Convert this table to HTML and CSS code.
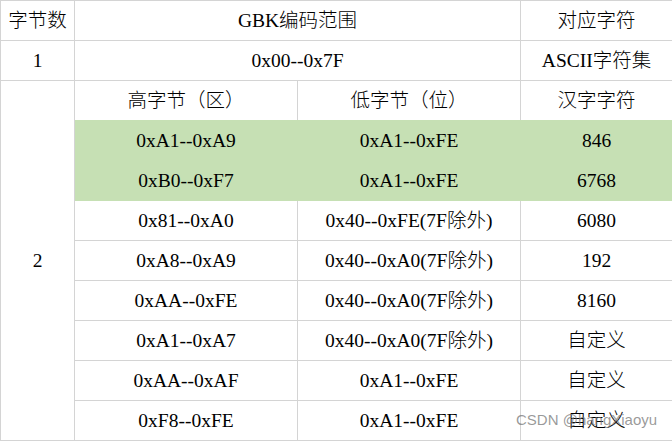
FILE: index.html
```html
<!DOCTYPE html>
<html lang="zh">
<head>
<meta charset="utf-8">
<title>GBK编码范围</title>
<link rel="stylesheet" href="styles.css">
</head>
<body>
<div class="wrap">
<table class="gbk">
  <colgroup>
    <col class="c1"><col class="c2"><col class="c3"><col class="c4">
  </colgroup>
  <tbody>
    <tr><td>字节数</td><td colspan="2">GBK编码范围</td><td>对应字符</td></tr>
    <tr><td>1</td><td colspan="2">0x00--0x7F</td><td>ASCII字符集</td></tr>
    <tr class="pre-green"><td rowspan="9">2</td><td>高字节（区）</td><td>低字节（位）</td><td>汉字字符</td></tr>
    <tr class="green"><td>0xA1--0xA9</td><td>0xA1--0xFE</td><td>846</td></tr>
    <tr class="green"><td>0xB0--0xF7</td><td>0xA1--0xFE</td><td>6768</td></tr>
    <tr><td>0x81--0xA0</td><td>0x40--0xFE(7F除外)</td><td>6080</td></tr>
    <tr><td>0xA8--0xA9</td><td>0x40--0xA0(7F除外)</td><td>192</td></tr>
    <tr><td>0xAA--0xFE</td><td>0x40--0xA0(7F除外)</td><td>8160</td></tr>
    <tr><td>0xA1--0xA7</td><td>0x40--0xA0(7F除外)</td><td>自定义</td></tr>
    <tr><td>0xAA--0xAF</td><td>0xA1--0xFE</td><td>自定义</td></tr>
    <tr><td>0xF8--0xFE</td><td>0xA1--0xFE</td><td>自定义</td></tr>
  </tbody>
</table>
<div class="watermark">CSDN @hangXiaoyu</div>
</div>
</body>
</html>
```
FILE: styles.css
```css
html, body {
  margin: 0;
  padding: 0;
  background: #ffffff;
}
.wrap {
  position: relative;
  width: 672px;
  height: 441px;
}
.gbk {
  border-collapse: collapse;
  table-layout: fixed;
  width: 672px;
  font-family: "Liberation Serif", "Noto Sans CJK SC", serif;
  font-size: 19.5px;
  color: #000;
}
.c1 { width: 74px; }
.c2 { width: 223px; }
.c3 { width: 223px; }
.c4 { width: 152px; }
.gbk td {
  border: 1px solid #d4d4d4;
  height: 39px;
  padding: 0;
  text-align: center;
  vertical-align: middle;
  line-height: 22px;
  font-weight: 300;
}
.pre-green td + td {
  border-bottom-color: #c6e0b4;
}
.green td {
  background: #c6e0b4;
  border-color: #c6e0b4;
}
.watermark {
  position: absolute;
  left: 516px;
  top: 411px;
  font-family: "Liberation Sans", "Noto Sans", sans-serif;
  font-size: 15px;
  color: rgba(120, 120, 120, 0.75);
  white-space: nowrap;
}
```
